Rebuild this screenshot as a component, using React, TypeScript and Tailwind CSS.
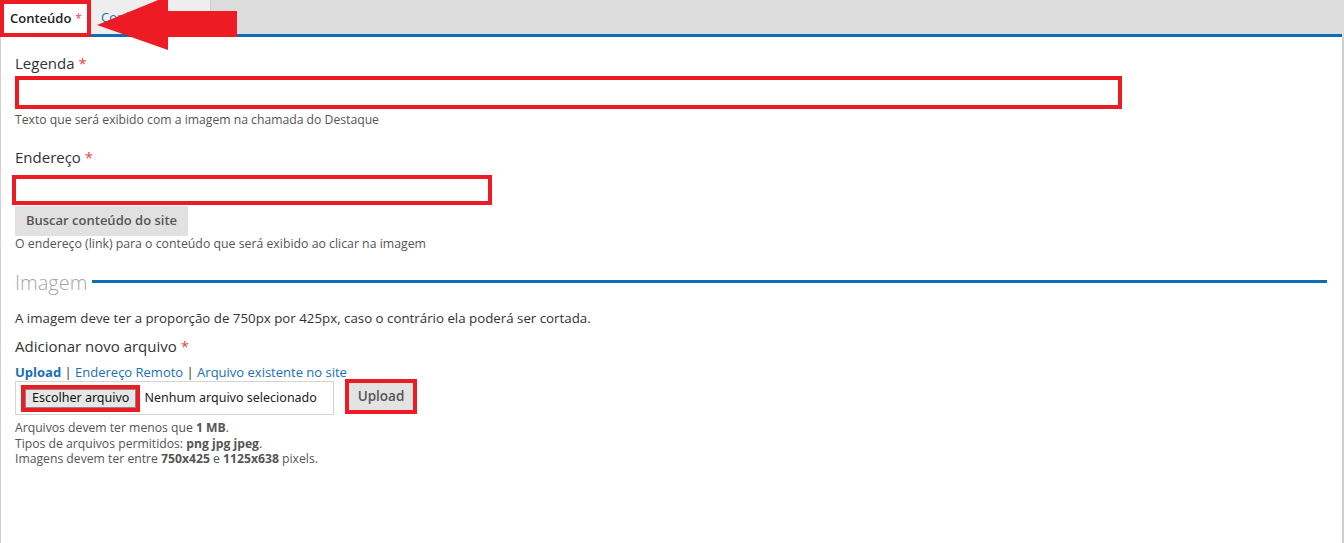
import React from "react";

const F = { fontFamily: '"Open Sans", "Noto Sans", sans-serif' };

export default function App() {
  return (
    <div className="relative w-[1344px] h-[543px] overflow-hidden bg-white text-[#333]" style={F}>
      {/* Tab bar */}
      <div className="flex h-[37px] bg-[#dddddd]">
        <div className="w-[91px] h-[37px] bg-white border-4 border-[#ed1c24] flex items-center pl-[6px] text-[13px] font-semibold text-[#222]">
          Conteúdo<span className="ml-[4px] text-[#e8434f] font-normal text-[12px]">*</span>
        </div>
        <div className="flex flex-col w-[120px]">
          <div className="h-[34px] bg-[#eeeeee] border-r border-[#cfcfcf] flex items-center pl-[10px] pt-[2px] text-[13px] text-[#1a6fb5]">
            Configurações
          </div>
          <div className="h-[3px] bg-[#0b6fb8]" />
        </div>
        <div className="flex-1 flex flex-col">
          <div className="h-[34px]" />
          <div className="h-[3px] bg-[#0b6fb8] mr-[2px]" />
        </div>
      </div>

      {/* Arrow annotation */}
      <svg className="absolute left-[96px] top-0" width="142" height="52" viewBox="0 0 142 52">
        <polygon points="1,25 72,-4 72,11 141,11 141,37 72,37 72,50" fill="#ed1c24" />
      </svg>

      {/* Content */}
      <div className="h-[506px] border-l border-r-2 border-[#cfcfcf] pl-[14px] pr-[14px]">
        <div className="pt-[16px] text-[15px] leading-[20px] text-[#333]">
          Legenda <span className="text-[#e8434f]">*</span>
        </div>
        <div className="mt-[3px] w-[1107px] h-[33px] border-4 border-[#ed1c24] bg-white" />
        <div className="mt-[3px] text-[12.2px] leading-[16px] text-[#555]">
          Texto que será exibido com a imagem na chamada do Destaque
        </div>

        <div className="mt-[19px] text-[15px] leading-[20px]">
          Endereço <span className="text-[#e8434f]">*</span>
        </div>
        <div className="mt-[8px] -ml-[3px] w-[480px] h-[30px] border-4 border-[#ed1c24] bg-white" />
        <div className="mt-[1px] w-[173px] h-[30px] bg-[#e1e1e1] flex items-center justify-center text-[13px] font-semibold text-[#555]">
          Buscar conteúdo do site
        </div>
        <div className="mt-[0px] text-[12.3px] leading-[16px] text-[#555]">
          O endereço (link) para o conteúdo que será exibido ao clicar na imagem
        </div>

        {/* Fieldset Imagem */}
        <div className="mt-[18px] flex items-center">
          <span className="text-[20px] leading-[26px] text-[#a6a6a6] font-light">Imagem</span>
          <div className="ml-[5px] h-[3px] w-[1235px] bg-[#0b6fb8] -mt-[3px]" />
        </div>
        <div className="mt-[13px] text-[13.3px] leading-[18px] text-[#333]">
          A imagem deve ter a proporção de 750px por 425px, caso o contrário ela poderá ser cortada.
        </div>
        <div className="mt-[9px] text-[15px] leading-[20px]">
          Adicionar novo arquivo <span className="text-[#e8434f]">*</span>
        </div>
        <div className="mt-[8px] text-[13px] leading-[17px] text-[#1a6fb5]">
          <span className="font-bold">Upload</span>
          <span className="text-[#333]"> | </span>
          <span>Endereço Remoto</span>
          <span className="text-[#333]"> | </span>
          <span>Arquivo existente no site</span>
        </div>
        <div className="flex items-start">
          <div className="mt-0 w-[319px] h-[34px] border border-[#d4d4d4] flex items-center pl-[5px]">
            <div className="border-4 border-[#ed1c24] h-[27px] flex items-center">
              <div className="h-[19px] px-[6px] bg-[#e6e6e6] border border-[#888] flex items-center text-[12.5px] text-[#111]" style={{ fontFamily: '"Noto Sans", sans-serif' }}>
                Escolher arquivo
              </div>
            </div>
            <span className="ml-[4px] text-[12.5px] text-[#222]" style={{ fontFamily: '"Noto Sans", sans-serif' }}>Nenhum arquivo selecionado</span>
          </div>
          <div className="ml-[11px] -mt-[2px] w-[72px] h-[35px] border-4 border-[#ed1c24] bg-[#e3e3e3] flex items-center justify-center text-[13.5px] font-semibold text-[#555]">
            Upload
          </div>
        </div>
        <div className="mt-[5px] text-[12.2px] leading-[15.5px] text-[#555]">
          <div>Arquivos devem ter menos que <b>1 MB</b>.</div>
          <div>Tipos de arquivos permitidos: <b>png jpg jpeg</b>.</div>
          <div>Imagens devem ter entre <b>750x425</b> e <b>1125x638</b> pixels.</div>
        </div>
      </div>
    </div>
  );
}
